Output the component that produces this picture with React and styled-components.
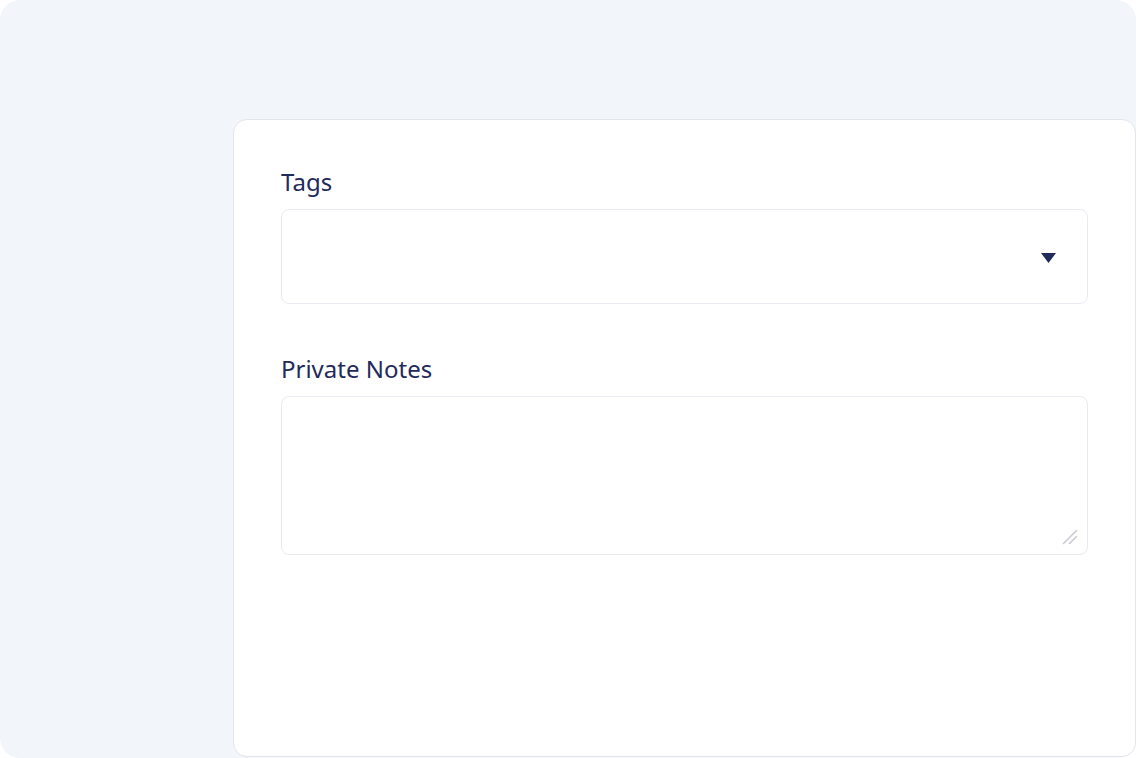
import React from 'react';
import styled, { createGlobalStyle } from 'styled-components';

const GlobalStyle = createGlobalStyle`
  html, body {
    margin: 0;
    background: #ffffff;
  }
  * {
    box-sizing: border-box;
  }
`;

const Frame = styled.div`
  width: 1136px;
  height: 758px;
  background: #f2f5fa;
  border-radius: 20px;
  padding: 119px 0 1px 233px;
  display: flex;
  font-family: 'Noto Sans', 'Open Sans', sans-serif;
`;

const Card = styled.div`
  flex: 1;
  background: #ffffff;
  border: 1.5px solid #e3e5eb;
  border-radius: 14px;
  padding: 44px 47px 0 47px;
  display: flex;
  flex-direction: column;
`;

const Field = styled.div`
  display: flex;
  flex-direction: column;
  margin-bottom: ${({ gap }) => gap || 0}px;
`;

const Label = styled.label`
  font-size: 24px;
  line-height: 36px;
  color: #1f2b5b;
  margin-bottom: 9px;
`;

const SelectBox = styled.div`
  height: 95px;
  border: 1.5px solid #e8ebf1;
  border-radius: 8px;
  display: flex;
  align-items: center;
  justify-content: flex-end;
  padding-right: 31px;
`;

const Caret = styled.svg`
  width: 15px;
  height: 10px;
  margin-top: 2px;
`;

const NotesWrap = styled.div`
  position: relative;
  display: flex;
`;

const NotesArea = styled.textarea`
  flex: 1;
  height: 159px;
  border: 1.5px solid #e8ebf1;
  border-radius: 8px;
  resize: none;
  outline: none;
  font-family: inherit;
  font-size: 18px;
  padding: 12px 16px;
  color: #1f2b5b;
`;

const Grip = styled.svg`
  position: absolute;
  right: 10px;
  bottom: 10px;
  width: 16px;
  height: 16px;
  pointer-events: none;
`;

const App = () => (
  <>
    <GlobalStyle />
    <Frame>
      <Card>
        <Field gap={47}>
          <Label>Tags</Label>
          <SelectBox>
            <Caret viewBox="0 0 15 10">
              <path d="M0 0 H15 L7.5 10 Z" fill="#1f2b5b" />
            </Caret>
          </SelectBox>
        </Field>
        <Field>
          <Label>Private Notes</Label>
          <NotesWrap>
            <NotesArea />
            <Grip viewBox="0 0 16 16">
              <path
                d="M1.5 14.5 L14.5 1.5 M7.5 14.5 L14.5 7.5"
                stroke="#c9ccd3"
                strokeWidth="1.6"
                strokeLinecap="round"
              />
            </Grip>
          </NotesWrap>
        </Field>
      </Card>
    </Frame>
  </>
);

export default App;
